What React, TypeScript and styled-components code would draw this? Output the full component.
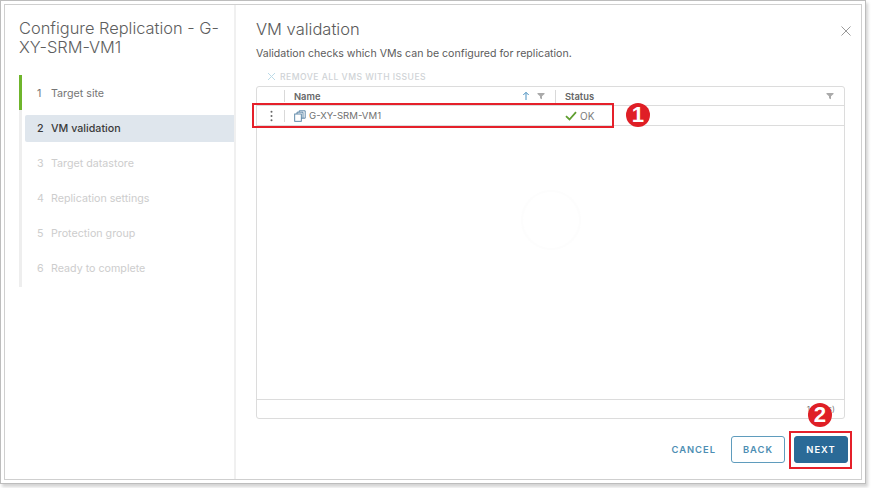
import React from "react";
import styled, { createGlobalStyle } from "styled-components";

const Global = createGlobalStyle`
  html, body { margin: 0; padding: 0; background: #fff; }
  body { font-family: Inter, "Liberation Sans", sans-serif; color: #565656; }
  * { box-sizing: border-box; }
`;

const Screen = styled.div`
  position: relative;
  width: 871px;
  height: 488px;
  overflow: hidden;
  background: #fff;
`;
const OuterFrame = styled.div`
  width: 866px;
  height: 484px;
  padding: 3px;
  border: 1px solid #bdbdbd;
  background: #fff;
  box-shadow: 2px 3px 3px #d4d4d4;
`;
const Dialog = styled.div`
  display: flex;
  width: 100%;
  height: 100%;
  border: 1px solid #cfcfcf;
  background: #fff;
`;
const Sidebar = styled.aside`
  width: 231px;
  flex: none;
  border-right: 2px solid #f0f0f0;
  padding: 14px 0 0 14px;
`;
const DialogTitle = styled.h1`
  margin: 0 0 18px;
  width: 205px;
  font-size: 16.4px;
  line-height: 19px;
  font-weight: 300;
  color: #5e5e5e;
`;
const Steps = styled.ol`
  list-style: none;
  margin: 0;
  padding: 5px 0 5px;
  width: 215px;
  border-left: 3px solid #eeeeee;
  position: relative;
`;
const Step = styled.li<{ $state: "done" | "active" | "todo" }>`
  display: flex;
  align-items: center;
  height: 27px;
  margin: 0 0 8px 3px;
  padding-left: 12px;
  gap: 8px;
  font-size: 10.7px;
  border-radius: 2px 0 0 2px;
  background: ${(p) => (p.$state === "active" ? "#dfe6ed" : "transparent")};
  color: ${(p) => (p.$state === "active" ? "#3a3a3a" : p.$state === "done" ? "#757575" : "#cdcdcd")};
  font-weight: ${(p) => (p.$state === "active" ? 500 : 400)};
  &:last-child { margin-bottom: 0; }
`;
const DoneBar = styled.span`
  position: absolute;
  left: -3px;
  top: 0;
  width: 3px;
  height: 35px;
  background: #6fb52c;
`;
const Num = styled.span`
  width: 6px;
`;
const Main = styled.main`
  flex: 1;
  min-width: 0;
  display: flex;
  flex-direction: column;
  padding: 13px 16px 0 20px;
  position: relative;
`;
const MainTitle = styled.h2`
  margin: 0 0 7px;
  font-size: 16.5px;
  line-height: 22px;
  font-weight: 300;
  color: #5a5a5a;
`;
const Desc = styled.p`
  margin: 0 0 9px;
  font-size: 10.6px;
  line-height: 14px;
  color: #5c5c5c;
`;
const ActionBar = styled.div`
  display: flex;
  align-items: center;
  height: 13px;
  gap: 4px;
  padding-left: 11px;
  margin-bottom: 3px;
  font-size: 8.6px;
  letter-spacing: 0.46px;
  font-weight: 500;
  color: #cfd3d6;
`;
const Grid = styled.section`
  height: 333px;
  flex: none;
  display: flex;
  flex-direction: column;
  border: 1px solid #dcdcdc;
  border-radius: 3px;
`;
const HeadRow = styled.div`
  display: flex;
  align-items: center;
  height: 19px;
  flex: none;
  border-bottom: 1px solid #dcdcdc;
  font-size: 9.4px;
  font-weight: 600;
  color: #666;
`;
const DataRow = styled.div`
  display: flex;
  align-items: center;
  height: 20px;
  flex: none;
  border-bottom: 1px solid #dcdcdc;
  font-size: 9.6px;
  color: #707070;
`;
const HandleCell = styled.div`
  width: 28px;
  height: 12px;
  padding-left: 2px;
  display: flex;
  align-items: center;
  justify-content: center;
  border-right: 1px solid #d9d9d9;
  flex: none;
  color: #666;
`;
const NameCell = styled.div`
  width: 271px;
  height: 13px;
  padding: 0 10px 0 9px;
  display: flex;
  align-items: center;
  flex: none;
  gap: 3px;
  border-right: 1px solid #d9d9d9;
`;
const RowNameCell = styled(NameCell)`
  border-right: none;
`;
const Grow = styled.span`
  flex: 1;
`;
const SortGap = styled.span`
  width: 1px;
`;
const StatusCell = styled.div`
  flex: 1;
  padding: 0 10px 0 9px;
  display: flex;
  align-items: center;
  gap: 2px;
`;
const RowStatusCell = styled(StatusCell)`
  color: #7c7c7c;
  gap: 3px;
  font-size: 10px;
`;
const Body = styled.div`
  flex: 1;
  display: flex;
  justify-content: center;
  padding-top: 62px;
`;
const FootRow = styled.div`
  height: 19px;
  flex: none;
  border-top: 1px solid #dcdcdc;
  display: flex;
  align-items: center;
  justify-content: flex-end;
  padding-right: 9px;
  font-size: 8px;
  color: #777;
`;
const Actions = styled.div`
  display: flex;
  align-items: center;
  justify-content: flex-end;
  gap: 9px;
  margin-top: 17px;
  margin-right: -3px;
`;
const Btn = styled.button<{ $kind: "link" | "outline" | "solid" }>`
  height: 27px;
  min-width: ${(p) => (p.$kind === "link" ? "auto" : "54px")};
  padding: 0 ${(p) => (p.$kind === "link" ? "5px" : "6px")};
  font-family: inherit;
  font-size: 9.4px;
  font-weight: 600;
  letter-spacing: 1px;
  border-radius: 3px;
  border: 1px solid ${(p) => (p.$kind === "link" ? "transparent" : p.$kind === "outline" ? "#5f9cbd" : "#2a6a97")};
  color: ${(p) => (p.$kind === "solid" ? "#fff" : "#4d8eb3")};
  background: ${(p) => (p.$kind === "solid" ? "#2a6a97" : "#fff")};
`;
const CloseBtn = styled.div`
  position: absolute;
  top: 20px;
  right: 9px;
  width: 12px;
  height: 12px;
  display: flex;
`;
const RedBox = styled.div<{ $l: number; $t: number; $w: number; $h: number }>`
  position: absolute;
  left: ${(p) => p.$l}px;
  top: ${(p) => p.$t}px;
  width: ${(p) => p.$w}px;
  height: ${(p) => p.$h}px;
  border: 2px solid #e5202a;
`;
const Badge = styled.div<{ $cx: number; $cy: number; $r: number }>`
  position: absolute;
  left: ${(p) => p.$cx - p.$r}px;
  top: ${(p) => p.$cy - p.$r}px;
  width: ${(p) => p.$r * 2}px;
  height: ${(p) => p.$r * 2}px;
  border-radius: 50%;
  background: #df1f26;
  color: #fff;
  font-family: "Liberation Sans", sans-serif;
  font-weight: 700;
  font-size: ${(p) => p.$r * 1.85}px;
  line-height: ${(p) => p.$r * 2}px;
  text-align: center;
`;

const Filter = ({ color = "#aaa" }: { color?: string }) => (
  <svg width="8" height="8" viewBox="0 0 8 8">
    <path d="M0.5 1h7v1L5 4.2V7.2L3 6.2V4.2L0.5 2z" fill={color} />
  </svg>
);

const VmIcon = () => (
  <svg width="12" height="12" viewBox="0 0 12 12" fill="none" stroke="#4f7da0" strokeWidth="0.9">
    <rect x="0.7" y="4" width="6.6" height="7.3" />
    <path d="M3 4V2.2h2.2V0.8h6v7.4H7.3M5.2 2.2H9V8.2" />
  </svg>
);

const stepsData = ["Target site", "VM validation", "Target datastore", "Replication settings", "Protection group", "Ready to complete"];

export default function App() {
  return (
    <Screen>
      <Global />
      <OuterFrame>
        <Dialog>
          <Sidebar>
            <DialogTitle>Configure Replication - G-XY-SRM-VM1</DialogTitle>
            <Steps>
              <DoneBar />
              {stepsData.map((s, i) => (
                <Step key={s} $state={i === 0 ? "done" : i === 1 ? "active" : "todo"}>
                  <Num>{i + 1}</Num>
                  <span>{s}</span>
                </Step>
              ))}
            </Steps>
          </Sidebar>
          <Main>
            <CloseBtn>
              <svg width="12" height="12" viewBox="0 0 12 12" stroke="#9a9a9a" strokeWidth="1">
                <path d="M1.5 1.5l9 9M10.5 1.5l-9 9" />
              </svg>
            </CloseBtn>
            <MainTitle>VM validation</MainTitle>
            <Desc>Validation checks which VMs can be configured for replication.</Desc>
            <ActionBar>
              <svg width="9" height="9" viewBox="0 0 9 9" stroke="#bcdbe8" strokeWidth="1">
                <path d="M1 1l7 7M8 1l-7 7" />
              </svg>
              REMOVE ALL VMS WITH ISSUES
            </ActionBar>
            <Grid>
              <HeadRow>
                <HandleCell />
                <NameCell>
                  Name
                  <Grow />
                  <svg width="8" height="10" viewBox="0 0 8 10" stroke="#4a90c0" strokeWidth="1" fill="none">
                    <path d="M4 9V1.5M1.3 4L4 1.3 6.7 4" />
                  </svg>
                  <SortGap />
                  <Filter />
                </NameCell>
                <StatusCell>
                  Status
                  <Grow />
                  <Filter />
                </StatusCell>
              </HeadRow>
              <DataRow>
                <HandleCell>
                  <svg width="3" height="12" viewBox="0 0 3 12" fill="#666">
                    <circle cx="1.5" cy="1.8" r="1" />
                    <circle cx="1.5" cy="6" r="1" />
                    <circle cx="1.5" cy="10.2" r="1" />
                  </svg>
                </HandleCell>
                <RowNameCell>
                  <VmIcon />
                  G-XY-SRM-VM1
                </RowNameCell>
                <RowStatusCell>
                  <svg width="12" height="10" viewBox="0 0 12 10" fill="none" stroke="#5f9e2f" strokeWidth="1.8">
                    <path d="M1 5.2l3.5 3.3L11 1.2" />
                  </svg>
                  OK
                </RowStatusCell>
              </DataRow>
              <Body>
                <svg width="64" height="64" viewBox="0 0 64 64" fill="none" stroke="#fdfdfd" strokeWidth="2">
                  <circle cx="32" cy="32" r="29" />
                </svg>
              </Body>
              <FootRow>1 VM(s)</FootRow>
            </Grid>
            <Actions>
              <Btn $kind="link">CANCEL</Btn>
              <Btn $kind="outline">BACK</Btn>
              <Btn $kind="solid">NEXT</Btn>
            </Actions>
          </Main>
        </Dialog>
      </OuterFrame>
      <RedBox $l={252} $t={103} $w={362} $h={25} />
      <Badge $cx={638} $cy={115} $r={12}>1</Badge>
      <RedBox $l={789} $t={431} $w={63} $h={38} />
      <Badge $cx={820} $cy={415} $r={12}>2</Badge>
    </Screen>
  );
}
